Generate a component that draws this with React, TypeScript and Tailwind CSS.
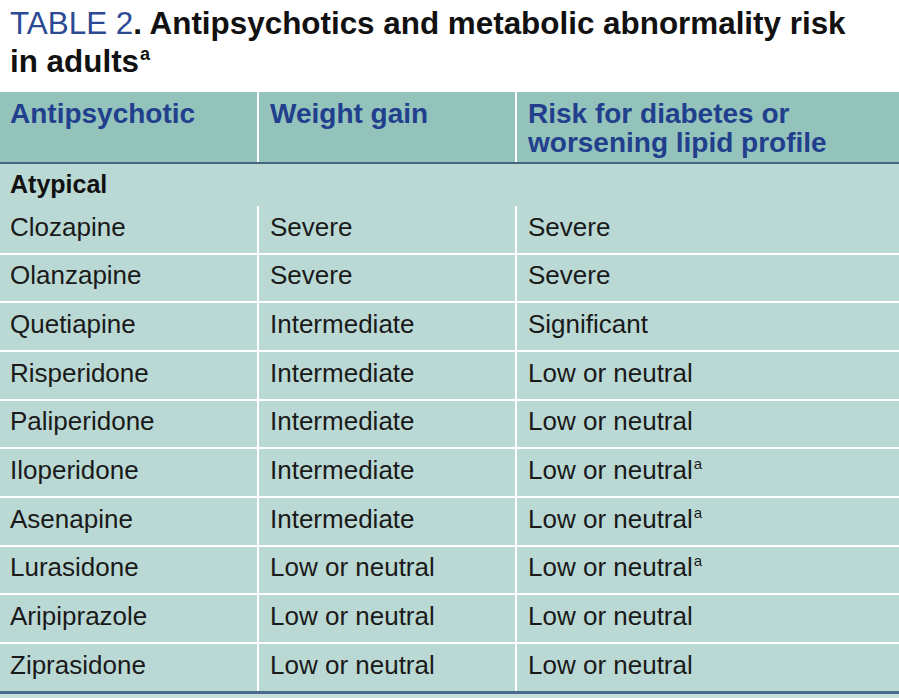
import * as React from 'react';

type Row = { drug: string; weight: string; risk: string; riskNote?: boolean };

const ROWS: Row[] = [
  { drug: 'Clozapine', weight: 'Severe', risk: 'Severe' },
  { drug: 'Olanzapine', weight: 'Severe', risk: 'Severe' },
  { drug: 'Quetiapine', weight: 'Intermediate', risk: 'Significant' },
  { drug: 'Risperidone', weight: 'Intermediate', risk: 'Low or neutral' },
  { drug: 'Paliperidone', weight: 'Intermediate', risk: 'Low or neutral' },
  { drug: 'Iloperidone', weight: 'Intermediate', risk: 'Low or neutral', riskNote: true },
  { drug: 'Asenapine', weight: 'Intermediate', risk: 'Low or neutral', riskNote: true },
  { drug: 'Lurasidone', weight: 'Low or neutral', risk: 'Low or neutral', riskNote: true },
  { drug: 'Aripiprazole', weight: 'Low or neutral', risk: 'Low or neutral' },
  { drug: 'Ziprasidone', weight: 'Low or neutral', risk: 'Low or neutral' }
];

function Sup() {
  return <sup className="-top-[10px] ml-[1px] text-[15px]">a</sup>;
}

export default function App() {
  return (
    <div className="h-[698px] w-[899px] overflow-hidden bg-white font-['Liberation_Sans',Arial,sans-serif]">
      <h1 className="px-[10px] pt-[5px] text-[31.4px] font-bold leading-[38px] text-[#111]">
        <span className="font-normal text-[#2b4a93]">TABLE 2</span>. Antipsychotics and metabolic abnormality risk
        <br />
        in adults
        <sup className="-top-[12px] ml-[1px] text-[18px]">a</sup>
      </h1>

      <div className="mt-[11px]">
        {/* header */}
        <div className="flex h-[72px] border-b-2 border-[#466780] bg-[#94c3bc] text-[28px] font-bold leading-[29px] text-[#213f8c]">
          <div className="w-[259px] border-r-2 border-white pl-[10px] pt-[7px]">Antipsychotic</div>
          <div className="w-[258px] border-r-2 border-white pl-[11px] pt-[7px]">Weight gain</div>
          <div className="flex-1 pl-[11px] pt-[7px]">
            Risk for diabetes or
            <br />
            worsening lipid profile
          </div>
        </div>

        <div className="bg-[#bad9d4] text-[26px] text-[#1a1a1a]">
          <div className="flex h-[42px] items-center pl-[10px] text-[25px] font-bold text-[#111]">Atypical</div>
          {ROWS.map((r, i) => {
            const last = i === ROWS.length - 1;
            return (
              <div
                key={r.drug}
                className={
                  last
                    ? 'flex h-[46.67px] items-center'
                    : 'flex h-[48.67px] items-center border-b-2 border-white'
                }
              >
                <div className="flex h-full w-[259px] items-center border-r-2 border-white pl-[10px] pb-[4px]">{r.drug}</div>
                <div className="flex h-full w-[258px] items-center border-r-2 border-white pl-[11px] pb-[4px]">{r.weight}</div>
                <div className="flex h-full flex-1 items-center pl-[11px] pb-[4px]">
                  <span>
                    {r.risk}
                    {r.riskNote && <Sup />}
                  </span>
                </div>
              </div>
            );
          })}
        </div>
        <div className="h-[3px] bg-[#4a6a8c]" />
        <div className="h-[10px] bg-[#c8e0dc]" />
      </div>
    </div>
  );
}
